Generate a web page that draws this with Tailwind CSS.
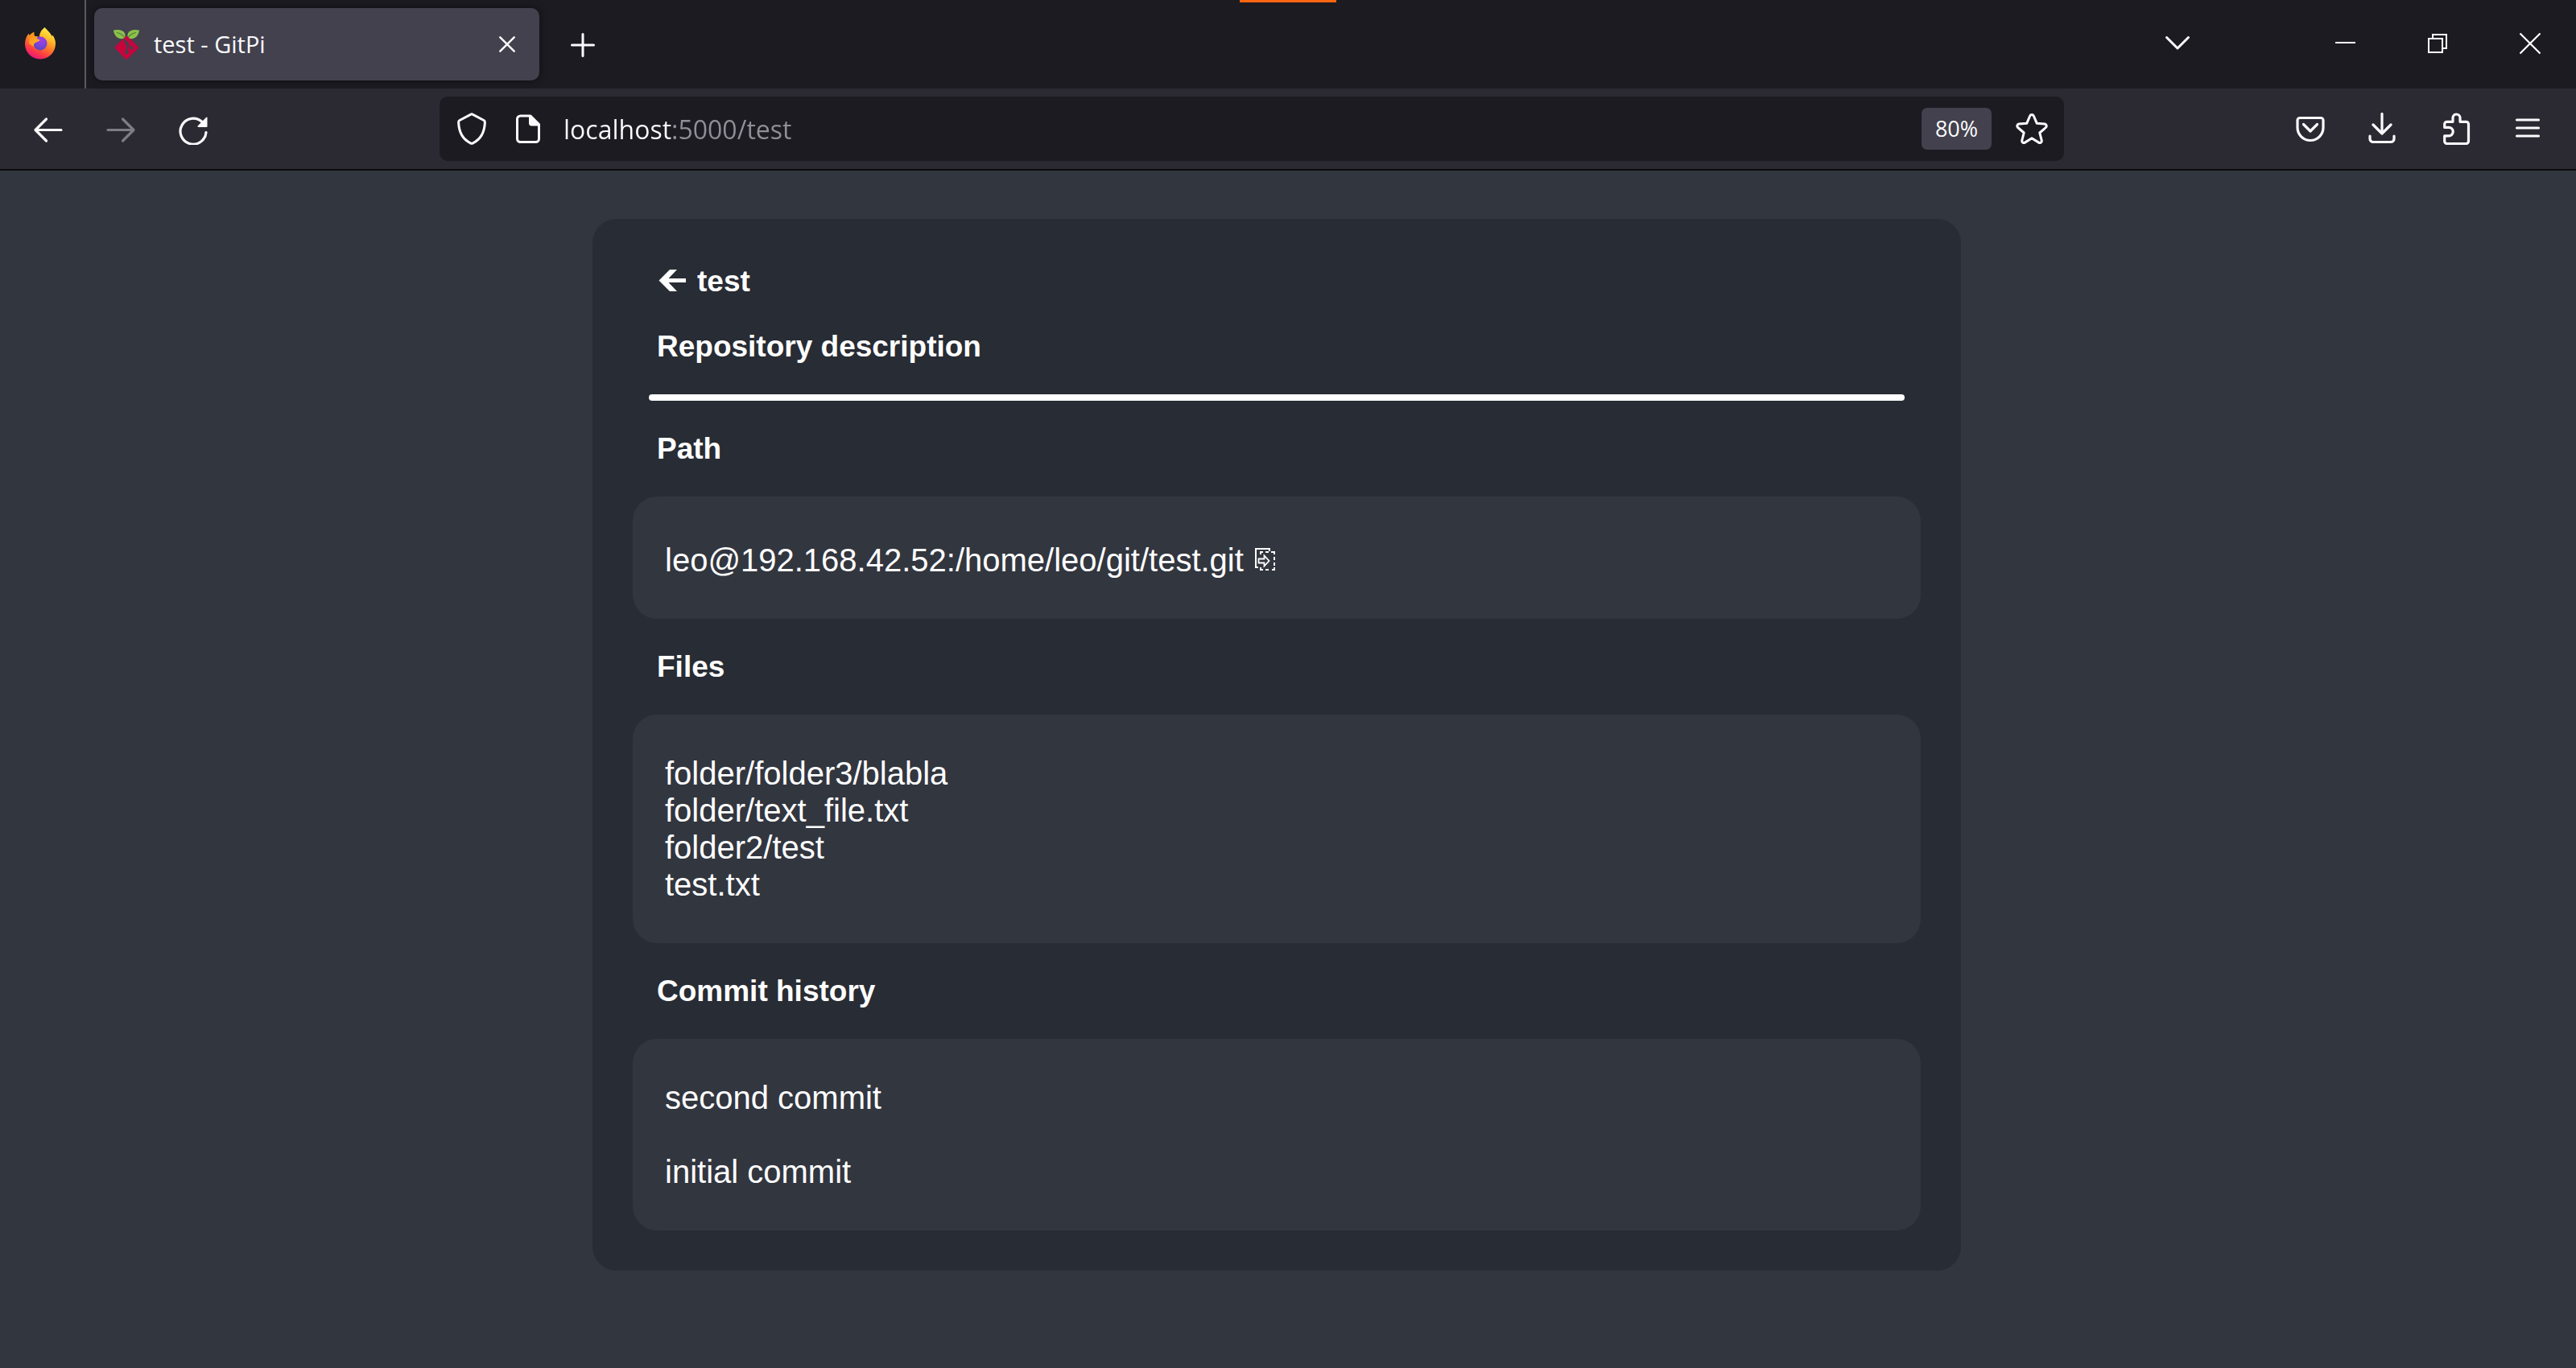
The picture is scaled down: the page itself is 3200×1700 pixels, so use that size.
<!DOCTYPE html>
<html lang="en">
<head>
<meta charset="utf-8">
<title>test - GitPi</title>
<script src="https://cdn.jsdelivr.net/npm/@tailwindcss/browser@4"></script>
</head>
<body class="flex min-h-screen flex-col bg-[#32363f] font-['Open_Sans',sans-serif] text-[#fbfbfe]">

<!-- Tab strip -->
<header class="relative flex h-[110px] items-center bg-[#1c1b22]">
  <div class="absolute inset-x-0 top-0 flex justify-center" aria-hidden="true"><span class="h-[3px] w-[120px] bg-[#ff6611]"></span></div>
  <button class="flex h-full w-[107px] items-center border-r-2 border-[#5b5a62] pl-[30px]" aria-label="Firefox View">
    <svg class="size-10" viewBox="0 -1 40 40" overflow="visible">
      <defs>
        <linearGradient id="flame" x1=".8" y1="0" x2=".3" y2="1"><stop offset="0" stop-color="#fff44f"/><stop offset=".3" stop-color="#ffc02a"/><stop offset=".55" stop-color="#ff7a2a"/><stop offset=".8" stop-color="#ff3647"/><stop offset="1" stop-color="#e31587"/></linearGradient>
        <radialGradient id="globe" cx=".6" cy=".3" r=".8"><stop offset="0" stop-color="#a63ce8"/><stop offset=".5" stop-color="#7a45d8"/><stop offset="1" stop-color="#4f46b8"/></radialGradient>
        <linearGradient id="head" x1="0" y1="0" x2="1" y2="1"><stop offset="0" stop-color="#ff8a16"/><stop offset="1" stop-color="#ffb62c"/></linearGradient>
      </defs>
      <path fill="url(#flame)" d="M25.500-2C29 2 33 5 34.500 9c.5-.5.7-1 .7-1.600 2.600 3.300 4 7.400 3.800 11.200C38.700 29.500 30.600 37.500 20 37.500S1 29.300 1 18.800C1 14 2.700 9 6 5.600l.6 3C8 6.500 10 4.800 12.300 4c-.3 2 0 3.600.8 5 2-.2 4.200.2 5.700 1.200C19 5.300 21.500.8 25.500-2Z"/>
      <circle cx="20" cy="18" r="8.500" fill="url(#globe)"/>
      <path fill="url(#head)" d="M6.500 8.600C8 6.500 10 4.800 12.300 4c-.3 2 0 3.600.8 5 1 .9 2.400 3 6.400 4.800-.3 1.400-2.700 2-4.500 2.700-2.400 1-3.700 3-3 5.500L6 18Z"/>
    </svg>
  </button>
  <div class="ml-[10px] flex h-[90px] w-[553px] items-center rounded-[10px] bg-[#42414d] px-5 shadow-[0_0_10px_rgba(0,0,0,0.5)]">
    <svg class="size-10" viewBox="0 0 40 40">
      <g fill="#8cc04b"><path d="M4 2.600C9 1.200 15.500 1.600 17.800 6c1 2.300 1 4.500.4 6.600C11 15 5 11 4 2.600Z"/><path d="M36 2.600C31 1.200 24.500 1.600 22.200 6c-1 2.300-1 4.500-.4 6.600C29 15 35 11 36 2.600Z"/></g>
      <path d="M8 5.500c4 .8 7 2.500 9.500 5.700M32 5.500c-4 .8-7 2.500-9.500 5.700" fill="none" stroke="#4d7f35" stroke-width="1.200"/>
      <path d="M18.900 10.600a2 2 0 0 1 2.800 0l12.500 12a2 2 0 0 1 0 2.800l-12.500 12.500a2 2 0 0 1-2.800 0L6.400 25.400a2 2 0 0 1 0-2.800Z" fill="#c7053d"/>
      <path d="M16 13.500l4.500 4.500v12M20.500 18.500l5.500 6" fill="none" stroke="#42414d" stroke-width="1.800"/>
      <g fill="#42414d"><circle cx="20.500" cy="18.500" r="2.200"/><circle cx="20.500" cy="30" r="2.200"/><circle cx="26.200" cy="24.500" r="2.200"/></g>
    </svg>
    <span class="ml-[14px] flex-1 text-[29px] leading-10">test - GitPi</span>
    <button class="size-10" aria-label="Close tab"><svg class="size-10" viewBox="0 0 40 40" fill="none" stroke="currentColor" stroke-width="2.500" stroke-linecap="round"><path d="M11.300 11.300l17.400 17.400M28.700 11.300L11.300 28.700"/></svg></button>
  </div>
  <button class="ml-[34px] size-10" aria-label="New tab"><svg class="size-10" viewBox="0 0 40 40" fill="none" stroke="currentColor" stroke-width="3" stroke-linecap="round"><path d="M20 7.500v27M6.500 21h27"/></svg></button>
  <button class="mr-[168px] ml-auto size-10" aria-label="List all tabs"><svg class="size-10" viewBox="0 0 40 40" fill="none" stroke="currentColor" stroke-width="3" stroke-linecap="round" stroke-linejoin="round"><path d="M6.500 11.500L20 25l13.500-13.500"/></svg></button>
  <div class="mr-[37px] flex gap-[75px]">
    <button class="size-10" aria-label="Minimize"><svg class="size-10" viewBox="0 0 40 40"><path d="M8 17h25v2H8Z" fill="#fff"/></svg></button>
    <button class="size-10" aria-label="Restore"><svg class="size-10" viewBox="0 0 40 40" fill="none" stroke="#fff" stroke-width="2"><path d="M9 13h17v17H9ZM14 12V8h17v17h-4"/></svg></button>
    <button class="size-10" aria-label="Close window"><svg class="size-10" viewBox="0 0 40 40" fill="none" stroke="#fff" stroke-width="2.200"><path d="M7.500 6.500l25 25M32.500 6.500l-25 25"/></svg></button>
  </div>
</header>

<!-- Navigation toolbar -->
<nav class="flex h-[102px] items-center border-b-2 border-[#0c0c0d] bg-[#2b2a33] px-10">
  <div class="flex gap-[50px]">
    <button class="size-10" aria-label="Back"><svg class="size-10" viewBox="0 0 40 40" fill="none" stroke="currentColor" stroke-width="3.200" stroke-linecap="round" stroke-linejoin="round"><path d="M36 21.500H4M17.500 8L4 21.500 17.500 35"/></svg></button>
    <button class="size-10 text-[#7e7d84]" aria-label="Forward" disabled><svg class="size-10" viewBox="0 0 40 40" fill="none" stroke="currentColor" stroke-width="3.200" stroke-linecap="round" stroke-linejoin="round"><path d="M4 21.500h32M22.500 8L36 21.500 22.500 35"/></svg></button>
    <button class="size-10" aria-label="Reload"><svg class="size-10" viewBox="0 0 40 40" fill="none" stroke="currentColor" stroke-width="3.200" stroke-linecap="round"><path d="M36 24.500A16 16 0 1 1 31 11.500"/><path d="M37.500 6v11a1 1 0 0 1-1 1H26.500c-1 0-1.300-1-.7-1.700L36 6c.6-.6 1.500-.8 1.500 0Z" fill="currentColor" stroke="none"/></svg></button>
  </div>
  <div class="mx-[286px] flex h-20 flex-1 items-center rounded-[10px] bg-[#1c1b22] px-5">
    <button class="size-10" aria-label="Tracking protection"><svg class="size-10" viewBox="0 0 40 40" fill="none" stroke="currentColor" stroke-width="3" stroke-linejoin="round"><path d="M20 1.800c.6 0 1 .3 1.500.6L35 9.500c1 .6 1.400 1.300 1.400 2.400C36 23 31.500 33 21.500 37.800c-1 .5-2 .5-3 0C8.500 33 4 23 3.600 11.900c0-1.100.4-1.800 1.400-2.400l13.500-7.100c.5-.3.900-.6 1.500-.6Z"/></svg></button>
    <button class="ml-[30px] size-10" aria-label="Site information"><svg class="size-10" viewBox="0 0 40 40" fill="none" stroke="currentColor" stroke-width="3" stroke-linejoin="round"><path d="M10.500 4H23l10.500 10.500V32.500a4 4 0 0 1-4 4h-19a4 4 0 0 1-4-4V8a4 4 0 0 1 4-4Z"/><path d="M22.500 4v9a2 2 0 0 0 2 2h9" fill="currentColor"/></svg></button>
    <input class="ml-6 h-14 min-w-0 flex-1 bg-[linear-gradient(to_right,#fbfbfe_136px,#8f8f98_136px)] bg-clip-text text-[32px] text-transparent outline-none" type="text" aria-label="Address" value="localhost:5000/test">
    <button class="h-[52px] w-[87px] rounded-[7px] bg-[#42414d] text-[27px]" aria-label="Zoom level">80%</button>
    <button class="ml-[30px] size-10" aria-label="Bookmark this page"><svg class="size-10" viewBox="0 0 40 40" fill="none" stroke="currentColor" stroke-width="3" stroke-linejoin="round"><path d="M17.700 4c.9-2 3.700-2 4.600 0l3.900 9.200 9.700.9c2.200.2 3.100 2.900 1.400 4.400L29.800 25l2.400 9.400c.5 2.100-1.700 3.800-3.600 2.700L20 31.800l-8.600 5.300c-1.900 1.100-4.100-.6-3.600-2.700L10.200 25l-7.500-6.500c-1.700-1.500-.8-4.200 1.400-4.400l9.700-.9Z"/></svg></button>
  </div>
  <div class="flex gap-[50px]">
    <button class="size-10" aria-label="Save to Pocket"><svg class="size-10" viewBox="0 0 40 40" fill="none" stroke="currentColor" stroke-width="3.200" stroke-linecap="round" stroke-linejoin="round"><path d="M7 6.500h26a3 3 0 0 1 3 3v9a16 16 0 0 1-32 0v-9a3 3 0 0 1 3-3Z"/><path d="M11.500 14.500L20 23l8.500-8.500"/></svg></button>
    <button class="size-10" aria-label="Downloads"><svg class="size-10" viewBox="0 0 40 40" fill="none" stroke="currentColor" stroke-width="3.200" stroke-linecap="round" stroke-linejoin="round"><path d="M19 1.500V26M8 15l11 11 11-11M4 29v3.500a4 4 0 0 0 4 4h22a4 4 0 0 0 4-4V29"/></svg></button>
    <button class="size-10" aria-label="Extensions"><svg class="size-10" viewBox="0 0 40 40" fill="none" stroke="currentColor" stroke-width="3.200" stroke-linejoin="round"><path d="M6.700 18.300v-4a3 3 0 0 1 3-3H17V6.500a4.500 4.500 0 0 1 9 0v4.800h7.500a3 3 0 0 1 3 3V35.500a3 3 0 0 1-3 3H9.700a3 3 0 0 1-3-3V28.800H12a5.200 5.200 0 0 0 0-10.500Z"/></svg></button>
    <button class="size-10" aria-label="Application menu"><svg class="size-10" viewBox="0 0 40 40" fill="none" stroke="currentColor" stroke-width="3.200" stroke-linecap="round"><path d="M6.500 9h27M6.500 19h27M6.500 29h27"/></svg></button>
  </div>
</nav>

<!-- Repository page -->
<main class="flex-1 pt-[60px] pr-7 pb-[60px] font-['Liberation_Sans',sans-serif] text-[40px] leading-[46px] text-white">
  <article class="mx-auto flex max-w-[1700px] flex-col gap-[38px] rounded-[30px] bg-[#282c34] px-[50px] pt-[56px] pb-[50px]">
    <h1 class="flex items-center px-[30px] text-[37px] leading-[43px] font-bold">
      <a href="#" aria-label="Back to repositories"><svg class="mr-[10px] h-[43px] w-10" viewBox="0 0 40 43" fill="currentColor"><path d="M2.500 20.500L16 7h9L14.500 18H36v5H14.500L25 34h-9Z"/></svg></a>test
    </h1>
    <h2 class="px-[30px] text-[37px] leading-[43px] font-bold">Repository description</h2>
    <hr class="mx-5 h-2 rounded-[4px] border-0 bg-white">
    <h2 class="px-[30px] text-[37px] leading-[43px] font-bold">Path</h2>
    <section class="flex items-center rounded-[30px] bg-[#32363f] px-10 pt-[56px] pb-[50px]">
      <span>leo@192.168.42.52:/home/leo/git/test.git</span>
      <button class="ml-3 h-[46px] w-8" aria-label="Copy path"><svg class="h-[46px] w-8" viewBox="0 0 32 46" fill="none" stroke="currentColor" stroke-width="2"><path d="M6 32H3V9h17v3"/><path d="M9 16v-3h3M15 13h4M22 13h4v3M26 19v4M26 26v4M26 32v3h-3M19 35h-4M12 35H9v-3"/><path d="M6.500 21.500h7v-4l6 6.500-6 6.500v-4h-7Z" stroke-width="1.800"/></svg></button>
    </section>
    <h2 class="px-[30px] text-[37px] leading-[43px] font-bold">Files</h2>
    <ul class="rounded-[30px] bg-[#32363f] px-10 py-[50px]">
      <li>folder/folder3/blabla</li>
      <li>folder/text_file.txt</li>
      <li>folder2/test</li>
      <li>test.txt</li>
    </ul>
    <h2 class="px-[30px] text-[37px] leading-[43px] font-bold">Commit history</h2>
    <ul class="flex flex-col gap-[46px] rounded-[30px] bg-[#32363f] px-10 py-[50px]">
      <li>second commit</li>
      <li>initial commit</li>
    </ul>
  </article>
</main>
</body>
</html>
